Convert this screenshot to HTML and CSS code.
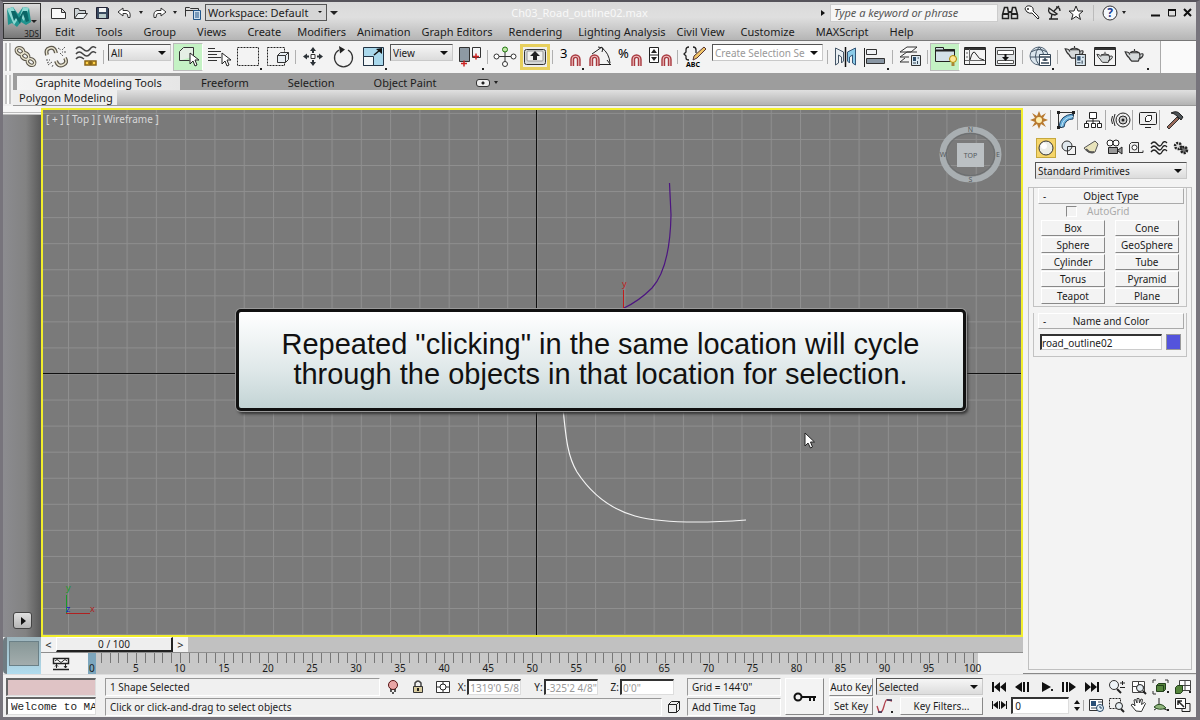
FILE: index.html
```html
<!DOCTYPE html>
<html lang="en">
<head>
    <meta charset="UTF-8">
    <meta name="viewport" content="width=device-width, initial-scale=1.0">
    <title>Ch03_Road_outline02.max</title>
    <link rel="stylesheet" href="styles.css">
</head>
<body>
    <!-- Shapes used by several icons -->
    <svg class="sprites" width="0" height="0" aria-hidden="true">
        <symbol id="magnet" viewBox="0 0 10 12"><path d="M2 11V5a3 3 0 0 1 6 0v6" fill="none" stroke="#a83a40" stroke-width="3.6"/><path d="M2 11V5a3 3 0 0 1 6 0v6" fill="none" stroke="#f0c0c0" stroke-width="1"/></symbol>
        <symbol id="cursor" viewBox="0 0 10 15"><path d="M1 1v11l3-3 2 5 2-1-2-5h4z" fill="#fff" stroke="#222"/></symbol>
        <symbol id="teapot" viewBox="0 0 22 16"><path d="M6 5h10q2 5-1 9H8Q6 12 5 10Q3 9 1 4q4 0 5 3M16 7q5-2 4 1t-5 4M6 5q5-3 10 0M11 3V1" fill="#d5d9da" stroke="#333" stroke-width="1.2"/></symbol>
        <symbol id="panel" viewBox="0 0 10 11"><path d="M.5.5h9v10h-9z" fill="#dceaf3" stroke="#333"/><path d="M2 2h3v4H2z" fill="#2c4c6a"/><path d="M6.500 3H8M2 8h3M6.500 6v3" stroke="#345"/></symbol>
    </svg>

    <div class="window">
        <header class="titlebar">
            <button class="app-button" aria-label="Application menu">
                <svg width="34" height="25" viewBox="0 0 34 25"><path d="M2 4l6-2 5 7 5-7 6 1 2 14-5 3-5-3-4 5-5-4-4 2z" fill="#20938e"/><path d="M2 4l6-2 5 12-4 6zM18 2l6 1-5 13-4-5z" fill="#8ed8d2"/><path d="M6 6l3 10 2-3 4 6 3-10 3 8 3-1-2-10-4 0-4 7-4-7z" fill="#0b6666"/><path d="M26 15h6l-3 3z" fill="#222"/></svg>
                <span>3DS</span>
            </button>
            <div class="title-rows">
                <div class="quickbar">
                    <button class="quick" aria-label="New"><svg width="18" height="14"><path d="M1.500 2.500h10l4 4v6h-14zM11.500 2.500v4h4" fill="#fafafa" stroke="#333"/></svg></button>
                    <button class="quick" aria-label="Open"><svg width="18" height="14"><path d="M2.500 12V2.500h4l1 2h6V7" fill="#ccd3d6" stroke="#333"/><path d="M2.500 12.500L6 7.500h9.500l-4 5z" fill="#eef2f3" stroke="#333"/></svg></button>
                    <button class="quick" aria-label="Save"><svg width="18" height="14"><path d="M2.500 1.500h11l1 1v10h-12z" fill="#3a4a60" stroke="#223"/><path d="M5 2h7v4H5z" fill="#f4f4f4"/><path d="M5 8h7v4H5z" fill="#bcc"/></svg></button>
                    <button class="quick undo" aria-label="Undo"><svg width="18" height="14"><path d="M2 6l5-4v2.500h4q4 1 3 7h-2q0-4-2-4H7V10z" fill="#fff" stroke="#333"/></svg></button>
                    <span class="tiny-arrow"></span>
                    <button class="quick undo" aria-label="Redo"><svg width="18" height="14"><path d="M16 6l-5-4v2.500H7q-4 1-3 7h2q0-4 2-4h3V10z" fill="#fff" stroke="#333"/></svg></button>
                    <span class="tiny-arrow"></span>
                    <button class="quick" aria-label="Project folder"><svg width="18" height="14"><path d="M1.500 10.500v-9h4l1 1h8v3M1.500 4.500h13" fill="none" stroke="#333"/><path d="M9.500 4.500h7v9h-7z" fill="#cfe0ee" stroke="#258"/><path d="M11 7h4M11 9h4M11 11h4" stroke="#258"/></svg></button>
                    <label class="picker workspace"><select aria-label="Workspace"><option>Workspace: Default</option></select></label>
                    <span class="workspace-more"></span>
                    <h1 class="file-name">Ch03_Road_outline02.max</h1>
                    <span class="search-arrow"></span>
                    <input class="search" type="text" aria-label="Search help" placeholder="Type a keyword or phrase">
                    <div class="help-icons">
                        <svg width="18" height="18"><path d="M3.500 3.500h3l1 5v6h-6v-4zM14.500 3.500h-3l-1 5v6h6v-4z" fill="#ddd" stroke="#222" stroke-width="1.500"/><path d="M7 8h4M2 10h5M11 10h5" stroke="#222" stroke-width="2"/></svg>
                        <svg width="18" height="18"><path d="M9 9l6 6 1-1-1-2-5-5q1-4-3-5T2 5l2 3q3 2 5 1z" fill="#fff" stroke="#222"/><circle cx="5" cy="5" r="1" fill="#222"/></svg>
                        <svg width="18" height="18"><path d="M4 4q-2 6 6 7l2-1zM9 7l5-5M4 15h9M6 15l1-5M11 3q4 0 4 4" fill="none" stroke="#222" stroke-width="1.300"/></svg>
                        <svg width="18" height="18"><path d="M9 2l2 5h5l-4 3.500 1.500 5L9 12.500l-4.500 3 1.500-5L2 7h5z" fill="#fff" stroke="#222"/></svg>
                    </div>
                    <button class="help" aria-label="Help"><svg width="16" height="16"><circle cx="8" cy="8" r="7" fill="#f4f8fc" stroke="#333"/><text x="8" y="12" text-anchor="middle">?</text></svg></button>
                    <span class="tiny-arrow"></span>
                    <div class="window-buttons">
                        <button aria-label="Minimize"><svg width="10" height="10"><path d="M0 7.500h9" stroke="#111" stroke-width="2"/></svg></button>
                        <button aria-label="Maximize"><svg width="10" height="10"><path d="M1.500 2h7v6h-7z" fill="none" stroke="#111"/><path d="M1 2h8" stroke="#111" stroke-width="2"/></svg></button>
                        <button aria-label="Close"><svg width="10" height="10"><path d="M1 1l7 7M8 1L1 8" stroke="#111" stroke-width="2"/></svg></button>
                    </div>
                </div>
                <nav class="menu">
                    <a href="#">Edit</a>
                    <a class="far" href="#">Tools</a>
                    <a class="far" href="#">Group</a>
                    <a class="far" href="#">Views</a>
                    <a class="far" href="#">Create</a>
                    <a href="#">Modifiers</a>
                    <a class="near" href="#">Animation</a>
                    <a class="near" href="#">Graph Editors</a>
                    <a href="#">Rendering</a>
                    <a href="#">Lighting Analysis</a>
                    <a class="near" href="#">Civil View</a>
                    <a href="#">Customize</a>
                    <a class="far" href="#">MAXScript</a>
                    <a class="far" href="#">Help</a>
                </nav>
            </div>
        </header>

        <div class="toolbar">
            <span class="grip"></span>
            <div class="tools">
                <button class="tool" aria-label="Link"><svg width="26" height="26"><g fill="none" stroke="#5d584d" stroke-width="3.500"><ellipse cx="7" cy="7" rx="4" ry="3" transform="rotate(35 7 7)"/><ellipse cx="12" cy="12" rx="4" ry="3" transform="rotate(35 12 12)"/><ellipse cx="18" cy="18" rx="4" ry="3" transform="rotate(35 18 18)"/></g><g fill="none" stroke="#e9e4cf" stroke-width="1.500"><ellipse cx="7" cy="7" rx="4" ry="3" transform="rotate(35 7 7)"/><ellipse cx="12" cy="12" rx="4" ry="3" transform="rotate(35 12 12)"/><ellipse cx="18" cy="18" rx="4" ry="3" transform="rotate(35 18 18)"/></g></svg></button>
                <button class="tool" aria-label="Unlink"><svg width="26" height="26"><path d="M4 11Q2 5 7 4t6 5M22 14q3 5-2 7t-7-4" fill="none" stroke="#5d584d" stroke-width="4"/><path d="M4 11Q2 5 7 4t6 5M22 14q3 5-2 7t-7-4" fill="none" stroke="#e9e4cf" stroke-width="1.500"/><path d="M15 4l3 2M22 3l-3 3M23 8h-4M17 9l3 3M3 16h4M9 18l-4 3M10 21l-1 2M4 19l2-1" stroke="#555" stroke-dasharray="2 1"/></svg></button>
                <button class="tool" aria-label="Bind to space warp"><svg width="26" height="26"><path d="M3 5q3-4 7 0t7 0 6-1M3 10q3-4 7 0t7 0 6-1M3 15q3-4 8 0" fill="none" stroke="#444" stroke-width="1.500"/><path d="M12 17h5v4h-5zM18 17h5v4h-5zM15 19h5" fill="#ffd24a" stroke="#8a6415" stroke-width="1.500"/></svg></button>
                <span class="sep"></span>
                <label class="picker filter"><select aria-label="Selection filter"><option>All</option></select></label>
                <button class="tool on" aria-label="Select object"><svg width="26" height="26"><path d="M4.500 16.500v-9l4-4h10v9M4.500 16.500h10" fill="#e5efe5" stroke="#333"/><use href="#cursor" x="14" y="8" width="10" height="15"/></svg></button>
                <button class="tool" aria-label="Select by name"><svg width="26" height="26"><path d="M3 4.500h7M3 7.500h13M3 10.500h9M3 13.500h13M3 16.500h9" stroke="#333"/><use href="#cursor" x="16" y="8" width="10" height="15"/></svg></button>
                <button class="tool fly" aria-label="Rectangular region"><svg width="26" height="26"><path d="M2.500 3.500h21v18h-21z" fill="none" stroke="#222" stroke-dasharray="2 1"/></svg></button>
                <button class="tool" aria-label="Window crossing"><svg width="26" height="26"><path d="M2.500 3.500h17v18h-17z" fill="none" stroke="#222" stroke-dasharray="2 1"/><path d="M12.500 11.500l3-3h8v7l-3 3h-8zM12.500 11.500h8v7M20.500 11.500l3-3" fill="#e7edf2" stroke="#333"/></svg></button>
                <span class="sep"></span>
                <button class="tool" aria-label="Move"><svg width="26" height="26"><path d="M13 3l3 4h-6zM13 22l3-4h-6zM3 12.500l4-3v6zM23 12.500l-4-3v6zM12 7h2v2h-2zM12 16h2v2h-2zM7 11.500h2v2H7zM17 11.500h2v2h-2z" fill="#2c3237"/><path d="M11 10.500h4v4h-4z" fill="#fff" stroke="#333"/></svg></button>
                <button class="tool" aria-label="Rotate"><svg width="26" height="26"><path d="M18 6a9 9 0 1 1-9 0" fill="none" stroke="#333" stroke-width="1.300"/><path d="M9 2l6 3.500-5 4z" fill="#222"/></svg></button>
                <button class="tool fly" aria-label="Scale"><svg width="26" height="26"><path d="M3.500 3.500h20v18h-20z" fill="#a9d8ec" stroke="#234"/><path d="M3.500 12.500h10v9h-10z" fill="#f2f6f8" stroke="#234"/><path d="M14 11l6-5" stroke="#111" stroke-width="1.500"/><path d="M22 4v6l-6-5z" fill="#111"/></svg></button>
                <label class="picker coords"><select aria-label="Reference coordinate system"><option>View</option></select></label>
                <button class="tool fly" aria-label="Pivot center"><svg width="26" height="26"><path d="M2.500 3.500h10v14h-10z" fill="#8e9aa4" stroke="#333"/><path d="M15.500 3.500h8v10h-8z" fill="#f2f4f6" stroke="#333"/><path d="M4 19.500h6M7 16.500v6M16 12.500h6M19 9.500v6" stroke="#c22" stroke-width="1.500"/></svg></button>
                <span class="sep"></span>
                <button class="tool" aria-label="Manipulate"><svg width="26" height="26"><path d="M13 6v14M4 12.500h18" stroke="#333"/><g fill="#fff" stroke="#333"><circle cx="13" cy="20" r="2.500"/><circle cx="4.500" cy="12.500" r="2.500"/><circle cx="21.500" cy="12.500" r="2.500"/><circle cx="13" cy="5.500" r="2.500" fill="#bfe8a5" stroke="#271"/></g></svg></button>
                <button class="tool key-on" aria-label="Keyboard shortcut override"><svg width="24" height="20"><rect x="1.500" y="2.500" width="21" height="15" rx="2" fill="#d5d8d8" stroke="#333"/><rect x="4" y="4" width="16" height="10" rx="1" fill="#f1f1ee" stroke="#999"/><path d="M12 4l5 5h-3v4h-4V9H7z" fill="#222"/></svg></button>
                <span class="sep"></span>
                <button class="tool fly" aria-label="Snaps toggle"><svg width="26" height="28"><text class="icon-text" x="3" y="15">3</text><use href="#magnet" x="13" y="11" width="11" height="13"/></svg></button>
                <button class="tool" aria-label="Angle snap"><svg width="26" height="26"><path d="M5 10L15 3M15 4q7 5 8 15M12 20.500h12M11 3l5 1-1 4M20 16l3 4" fill="none" stroke="#222"/><use href="#magnet" x="2" y="10" width="11" height="13"/></svg></button>
                <button class="tool" aria-label="Percent snap"><svg width="26" height="28"><text class="icon-text" x="1" y="15">%</text><use href="#magnet" x="14" y="11" width="11" height="13"/></svg></button>
                <button class="tool" aria-label="Spinner snap"><svg width="26" height="26"><path d="M2.500 3.500h9v15h-9zM2.500 11h9" fill="#fff" stroke="#222"/><path d="M7 5l3 4H4zM7 17l3-4H4z" fill="#222"/><use href="#magnet" x="14" y="10" width="11" height="13"/></svg></button>
                <span class="sep"></span>
                <button class="tool" aria-label="Edit named selection sets"><svg width="26" height="26"><path d="M7 3q-3 0-3 3v2l-2 2 2 2v2q0 2 3 2M11 3q3 0 3 3v3" fill="none" stroke="#222" stroke-width="1.300"/><path d="M22 3l2 2L15 14l-4 2 1-4z" fill="#f0c468" stroke="#533"/><text class="icon-abc" x="4" y="23">ABC</text></svg></button>
                <label class="picker sets"><select aria-label="Named selection sets"><option>Create Selection Se</option></select></label>
                <span class="sep"></span>
                <button class="tool" aria-label="Mirror"><svg width="26" height="26"><path d="M3.500 4v17l3-2V11l3 2v6l2-2V8z" fill="#e8eef2" stroke="#456"/><path d="M23.500 4v17l-3-2V11l-3 2v6l-2-2V8z" fill="#8ccbe8" stroke="#357"/><path d="M13.500 3v20" stroke="#111" stroke-width="1.500"/></svg></button>
                <button class="tool fly" aria-label="Align"><svg width="26" height="26"><path d="M2.500 4v19" stroke="#222"/><path d="M4.500 5.500h10v5h-10z" fill="#f0f2f4" stroke="#333"/><path d="M4.500 14.500h18v5h-18z" fill="#8996a3" stroke="#333"/></svg></button>
                <span class="sep"></span>
                <button class="tool" aria-label="Layers"><svg width="26" height="26"><path d="M3 8l7-5h10l-6 5zM3 13l7-5h10M3 13h9M3 18l5-4M3 18h9" fill="#fafafa" stroke="#333"/><use href="#panel" x="14" y="11" width="10" height="11"/></svg></button>
                <span class="sep"></span>
                <button class="tool on" aria-label="Graphite tools"><svg width="26" height="26"><path d="M3.500 5.500v-2h8v2h11v12h-19z" fill="#d3e1e8" stroke="#222"/><path d="M3 6.500h20" stroke="#222" stroke-width="2"/><circle cx="21" cy="15" r="3.500" fill="#ffe793" stroke="#a80"/><path d="M19.500 19h3v3h-3z" fill="#a8863a"/></svg></button>
                <button class="tool" aria-label="Curve editor"><svg width="26" height="26"><path d="M2.500 3.500h21v17h-21z" fill="#f4f4f4" stroke="#222"/><path d="M2 5h22" stroke="#333" stroke-width="2"/><path d="M7.500 5v15M3 16.500h20M4 9h2M4 13h2" stroke="#666"/><path d="M8 16q3-12 6-6t8 6" fill="none" stroke="#222"/></svg></button>
                <button class="tool" aria-label="Schematic view"><svg width="26" height="26"><path d="M3.500 3.500h20v18h-20z" fill="#dfe2e4" stroke="#222"/><path d="M5.500 6.500h16v4h-16zM5.500 16.500h16v3h-16z" fill="#fff" stroke="#555"/><path d="M13.500 10v3" stroke="#111" stroke-width="2"/><path d="M10 13h7l-3.500 4z" fill="#111"/></svg></button>
                <span class="sep"></span>
                <button class="tool fly" aria-label="Material editor"><svg width="26" height="26"><circle cx="12" cy="12" r="9" fill="#dae5ed" stroke="#567"/><path d="M4 8q8-5 16 0M3 13h17M12 3q-7 9 0 18M12 3q6 5 4 12" fill="none" stroke="#456"/><path d="M12.500 10.500h11v11h-11z" fill="#fff" stroke="#345"/><path d="M13 13h10M18 14v3M14 19h8M15.500 16h5" stroke="#345" stroke-width="1.500"/></svg></button>
                <span class="sep"></span>
                <button class="tool" aria-label="Render setup"><svg width="26" height="26"><use href="#teapot" x="2" y="1" width="21" height="15"/><use href="#panel" x="13" y="10" width="11" height="12"/></svg></button>
                <button class="tool" aria-label="Rendered frame"><svg width="26" height="26"><path d="M2.500 3.500h21v18h-21z" fill="#f4f4f4" stroke="#222"/><path d="M2 5h22" stroke="#333" stroke-width="2"/><use href="#teapot" x="4" y="7" width="18" height="13"/></svg></button>
                <button class="tool fly" aria-label="Render"><svg width="26" height="26"><use href="#teapot" x="2" y="4" width="21" height="15"/></svg></button>
            </div>
            <div class="toolbar-rest"></div>
        </div>

        <div class="ribbon">
            <span class="grip"></span>
            <div class="ribbon-body">
                <nav class="ribbon-tabs">
                    <a class="tab active" href="#">Graphite Modeling Tools</a>
                    <a class="tab" href="#">Freeform</a>
                    <a class="tab" href="#">Selection</a>
                    <a class="tab" href="#">Object Paint</a>
                    <button class="ribbon-toggle" aria-label="Minimize ribbon"></button>
                    <span class="tiny-arrow"></span>
                </nav>
                <div class="ribbon-panel"><button>Polygon Modeling</button></div>
            </div>
        </div>

        <div class="workspace-area">
            <div class="stage">
                <div class="stage-top">
                    <aside class="dock">
                        <span class="dock-grip"></span>
                        <button aria-label="Expand dock"></button>
                    </aside>
                    <main class="viewport">
                        <!-- Grid and splines, in drawing units -->
                        <svg class="scene" viewBox="43 110 978 525" preserveAspectRatio="xMidYMid slice">
                            <defs>
                                <pattern id="grid" x="536.500" y="373.500" width="29.280" height="26.060" patternUnits="userSpaceOnUse"><path d="M0 0V26.060M0 0H29.280" stroke="#8f8f8f" stroke-width="2"/></pattern>
                            </defs>
                            <rect x="43" y="110" width="978" height="525" fill="#7a7a7a"/>
                            <rect x="43" y="110" width="978" height="525" fill="url(#grid)"/>
                            <path d="M536.500 110v525M43 373.500h978" stroke="#101010"/>
                            <path d="M669.500 183L671 215Q670 268 652 288Q639 301 624 308" fill="none" stroke="#4c1580" stroke-width="1.200"/>
                            <path d="M563 408C566 440 568 457 577 472C590 492 607 508 635 516C665 524 705 523 746 520" fill="none" stroke="#f4f4f4" stroke-width="1.200"/>
                            <path d="M623.500 290v20" stroke="#c01c1c"/>
                            <text class="axis" x="622" y="287" fill="#c01c1c">y</text>
                            <path d="M66.500 613.500V595" stroke="#189a28"/>
                            <path d="M66 613.500h24" stroke="#b02020"/>
                            <text class="axis" x="66" y="591" fill="#189a28">y</text>
                            <text class="axis" x="90" y="612" fill="#b02020">x</text>
                            <text class="axis" x="66" y="612" fill="#1515c0">z</text>
                            <!-- View cube -->
                            <ellipse cx="970.500" cy="154.500" rx="28" ry="25" fill="none" stroke="#a9afb2" stroke-width="6"/>
                            <ellipse cx="970.500" cy="154.500" rx="24" ry="21" fill="none" stroke="#6a6e70"/>
                            <path d="M957 143h27v24h-27z" fill="#bbc0c3"/>
                            <g class="cube" text-anchor="middle"><text x="970.500" y="158">TOP</text><text x="970.500" y="132">N</text><text x="970.500" y="182">S</text><text x="943" y="157">W</text><text x="998" y="157">E</text></g>
                        </svg>
                        <div class="view-label">[ + ] [ Top ] [ Wireframe ]</div>
                    </main>
                </div>
                <div class="timeline">
                    <div class="dock-corner"><span></span></div>
                    <div class="time-rows">
                        <div class="slider-row">
                            <button class="step">&lt;</button><button class="frame-slider">0 / 100</button><button class="step">&gt;</button>
                        </div>
                        <div class="track">
                            <button class="mini-curve" aria-label="Mini curve editor"><svg width="18" height="16"><path d="M1.500 2.500h15v5h-15zM1 13.500h16" fill="#fff" stroke="#222" stroke-width="1.500"/><path d="M3 5q2-3 4 0t4 0 4 0M4.500 8v4M13.500 8v4M3 10.500L4.500 9 6 10.500M12 10l1.500 2L15 10" fill="none" stroke="#222"/></svg></button>
                            <div class="ruler">
                                <span class="now">0</span><span class="digit">5</span><span>10</span><span>15</span><span>20</span><span>25</span><span>30</span><span>35</span><span>40</span><span>45</span><span>50</span><span>55</span><span>60</span><span>65</span><span>70</span><span>75</span><span>80</span><span>85</span><span>90</span><span>95</span><span class="last">100</span>
                            </div>
                        </div>
                    </div>
                </div>
            </div>

            <aside class="command">
                <div class="command-tabs">
                    <button aria-label="Create"><svg width="20" height="20"><path d="M10 1l2 5 5-3-3 5 5 2-5 2 3 5-5-3-2 5-2-5-5 3 3-5-5-2 5-2-3-5 5 3z" fill="#b87a30"/><circle cx="10" cy="10" r="3" fill="#fff0b0"/></svg></button>
                    <button aria-label="Modify"><svg width="20" height="20"><path d="M2.500 17.500v-15h15v4M2.500 17.500h4" fill="none" stroke="#333"/><path d="M3 17Q4 5 17 4v5Q9 9 8 17z" fill="#68b0dc" stroke="#246"/><path d="M5.500 17Q7 7 17 6.500" fill="none" stroke="#c5e5f5"/><path d="M1 1h3v3H1zM16 1h3v3h-3zM1 16h3v3H1z" fill="#222"/></svg></button>
                    <button aria-label="Hierarchy"><svg width="20" height="20"><path d="M6.500 2.500h7v6h-7zM1.500 13.500h4v4h-4zM8.500 13.500h4v4h-4zM14.500 13.500h4v4h-4zM10 9v4M3.500 13v-2h13v2" fill="#fff" stroke="#222"/></svg></button>
                    <button aria-label="Motion"><svg width="20" height="20"><circle cx="12" cy="10" r="7" fill="#eee" stroke="#222"/><circle cx="12" cy="10" r="4" fill="#ccc" stroke="#222"/><circle cx="12" cy="10" r="1.500" fill="#222"/><path d="M4 4q-3 6 0 12M1.500 6q-2 4 0 8" fill="none" stroke="#222"/></svg></button>
                    <button aria-label="Display"><svg width="20" height="20"><rect x="1.500" y="2.500" width="17" height="12" rx="1" fill="#eee" stroke="#222"/><path d="M7.500 7.500l2-2h4v4l-2 2h-4zM7 17.500h6" fill="#fff" stroke="#222"/></svg></button>
                    <button aria-label="Utilities"><svg width="20" height="20"><path d="M2 17L12 7l2 2L4 19z" fill="#98695a" stroke="#333"/><path d="M6 3q6-3 9 1l3 3-2 3-4-4q-3-3-6-3z" fill="#4c5256" stroke="#222"/></svg></button>
                </div>
                <div class="create-kinds">
                    <button class="picked" aria-label="Geometry"><svg width="18" height="18"><circle cx="9" cy="9" r="7" fill="#eceee8" stroke="#333"/><circle cx="7" cy="7" r="3" fill="#fff"/></svg></button>
                    <button aria-label="Shapes"><svg width="18" height="18"><circle cx="7" cy="7" r="5" fill="#dfe8ee" stroke="#333"/><path d="M7.500 7.500h8v8h-8z" fill="none" stroke="#333"/></svg></button>
                    <button aria-label="Lights"><svg width="18" height="18"><path d="M13 2l3 3-3 8q-6 3-11-4z" fill="#e8e3bb" stroke="#555"/><path d="M4 10q3 4 8 3" fill="none" stroke="#555" stroke-width="2"/></svg></button>
                    <button aria-label="Cameras"><svg width="18" height="18"><circle cx="5" cy="4" r="3" fill="#fff" stroke="#222"/><circle cx="11" cy="4" r="3" fill="#fff" stroke="#222"/><path d="M3.500 8.500h9v6h-9zM13 11l4-3v7l-4-3" fill="#999" stroke="#222"/></svg></button>
                    <button aria-label="Helpers"><svg width="18" height="18"><path d="M2.500 13.500v-8l2-2h7v10M2 13.500h14v-2" fill="#eee" stroke="#333"/><circle cx="7.500" cy="8.500" r="2.500" fill="#fff" stroke="#333"/></svg></button>
                    <button aria-label="Space warps"><svg width="18" height="18"><path d="M1 5q3-4 6 0t5 0 5-1M1 9q3-4 6 0t5 0 5-1M1 13q3-4 6 0t5 0 5-1" fill="none" stroke="#222" stroke-width="1.300"/></svg></button>
                    <button aria-label="Systems"><svg width="18" height="18"><circle cx="6" cy="7" r="3" fill="#ddd" stroke="#222" stroke-width="2.500" stroke-dasharray="2 1"/><circle cx="12" cy="11" r="3" fill="#777" stroke="#222" stroke-width="2.500" stroke-dasharray="2 1"/></svg></button>
                </div>
                <label class="picker category"><select aria-label="Category"><option>Standard Primitives</option></select></label>

                <div class="rollouts">
                    <section class="rollout">
                        <h2><span>-</span>Object Type</h2>
                        <label class="autogrid"><input type="checkbox" disabled>AutoGrid</label>
                        <div class="type-grid">
                            <button>Box</button><button>Cone</button>
                            <button>Sphere</button><button>GeoSphere</button>
                            <button>Cylinder</button><button>Tube</button>
                            <button>Torus</button><button>Pyramid</button>
                            <button>Teapot</button><button>Plane</button>
                        </div>
                    </section>
                    <section class="rollout">
                        <h2><span>-</span>Name and Color</h2>
                        <div class="name-row">
                            <input type="text" aria-label="Object name" value="road_outline02">
                            <button class="swatch" aria-label="Object color"></button>
                        </div>
                    </section>
                </div>
            </aside>
        </div>

        <footer class="status">
            <div class="listener">
                <div class="macro"></div>
                <input type="text" aria-label="Listener" value="Welcome to MAXScript.">
            </div>
            <div class="messages">
                <div class="status-line">
                    <div class="sunken grow">1 Shape Selected</div>
                    <div class="lock-icons">
                        <svg width="14" height="16"><circle cx="7" cy="6" r="4.500" fill="#e8a5a5" stroke="#511"/><path d="M5 10v3M9 10v3M6 14h2" stroke="#222" stroke-width="1.500"/></svg>
                        <svg width="14" height="16"><path d="M4 7V4q3-4 6 0v3" fill="none" stroke="#444" stroke-width="1.500"/><path d="M2.500 7.500h9v6h-9z" fill="#d9cc9e" stroke="#333"/><path d="M7 9v3" stroke="#222" stroke-width="2"/></svg>
                        <svg width="14" height="16"><path d="M.5 2.500h13v11H.5zM7 2v12M0 8h14" fill="#fff" stroke="#333"/><circle cx="7" cy="8" r="3" fill="#fff" stroke="#222"/></svg>
                    </div>
                    <label class="coord">X:<input type="text" value="1319'0 5/8"></label>
                    <label class="coord">Y:<input type="text" value="-325'2 4/8&quot;"></label>
                    <label class="coord">Z:<input type="text" value="0'0&quot;"></label>
                </div>
                <div class="status-line">
                    <div class="sunken grow">Click or click-and-drag to select objects</div>
                    <button class="iso" aria-label="Adaptive degradation"><svg width="14" height="14"><path d="M1.500 4.500l3-3h8v8l-3 3h-8zM1.500 4.500h8v8M9.500 4.500l3-3" fill="none" stroke="#222"/></svg></button>
                </div>
            </div>
            <div class="grid-info">
                <div class="sunken">Grid = 144'0"</div>
                <div class="sunken">Add Time Tag</div>
            </div>
            <button class="raised set-keys" aria-label="Set keys"><svg width="24" height="12"><circle cx="5" cy="6" r="3.500" fill="none" stroke="#111" stroke-width="2"/><path d="M8 6h15M17 6v4M21 6v4" stroke="#111" stroke-width="2"/></svg></button>
            <div class="key-modes">
                <button class="raised">Auto Key</button>
                <button class="raised">Set Key</button>
            </div>
            <div class="key-filter">
                <label class="picker"><select aria-label="Key target"><option>Selected</option></select></label>
                <div class="filter-line">
                    <button class="tangent fly" aria-label="Default tangents"><svg width="18" height="16"><path d="M1 8l2 6Q6 16 8 8t4-6l4 1" fill="none" stroke="#b0404c" stroke-width="1.300"/><path d="M2 14h4M11 2h5" stroke="#335" stroke-width="1.500"/></svg></button>
                    <button class="raised grow">Key Filters...</button>
                </div>
            </div>
            <div class="playback">
                <div class="play-row">
                    <button aria-label="Go to start"><svg width="16" height="12"><path d="M1 1h2v10H1zM9 1v10L3 6zM15 1v10L9 6z" fill="#111"/></svg></button>
                    <button aria-label="Previous frame"><svg width="16" height="12"><path d="M8 1v10L1 6zM9 1h2v10H9zM13 1h2v10h-2z" fill="#111"/></svg></button>
                    <button class="fly" aria-label="Play"><svg width="16" height="12"><path d="M4 1v10l9-5z" fill="#111"/></svg></button>
                    <button aria-label="Next frame"><svg width="16" height="12"><path d="M8 1v10l7-5zM1 1h2v10H1zM5 1h2v10H5z" fill="#111"/></svg></button>
                    <button aria-label="Go to end"><svg width="16" height="12"><path d="M1 1v10l6-5zM7 1v10l6-5zM13 1h2v10h-2z" fill="#111"/></svg></button>
                </div>
                <div class="play-row">
                    <button aria-label="Key mode"><svg width="16" height="12"><path d="M1 2h1v8H1zM7 2v8L2 6zM8 2h1v8H8zM10 2v8l5-4zM15 2h1v8h-1z" fill="#111"/></svg></button>
                    <input type="text" aria-label="Current frame" value="0">
                    <span class="spinner"></span>
                    <button aria-label="Time configuration"><svg width="16" height="16"><path d="M1.500 2.500h13v11h-13z" fill="#fff" stroke="#333"/><path d="M3 4h5v5H3z" fill="#295078"/><path d="M10 5h4M3 11h6" stroke="#345"/><circle cx="12" cy="11" r="3.500" fill="#e7f2f8" stroke="#246"/><path d="M12 9v2h2" fill="none" stroke="#246"/></svg></button>
                </div>
            </div>
            <div class="nav-tools">
                <button aria-label="Zoom"><svg width="18" height="16"><circle cx="6" cy="6" r="4.500" fill="#eef4f8" stroke="#333"/><path d="M9 10l4 4" stroke="#222" stroke-width="2"/><path d="M12 4h5M14.500 2v4M12 8.500h5" stroke="#222"/></svg></button>
                <button aria-label="Zoom all"><svg width="18" height="16"><path d="M2.500 2.500h12v11h-12zM8.500 2v11M2 7.500h12" fill="#fff" stroke="#444"/><circle cx="10" cy="9" r="3.500" fill="#e5edf2" stroke="#222"/><path d="M13 12l3 3" stroke="#222" stroke-width="2"/></svg></button>
                <button class="fly" aria-label="Zoom extents"><svg width="18" height="16"><path d="M1 4V1h3M13 1h3v3M1 12v3h3" fill="none" stroke="#333"/><path d="M4.500 6.500l2-2h7v6l-2 2h-7zM4.500 6.500h7v6" fill="#55853c" stroke="#23401c"/></svg></button>
                <button class="fly" aria-label="Zoom extents all"><svg width="18" height="16"><path d="M5.500 1.500h11v10h-11zM11 1v10M5 6.500h11" fill="#fff" stroke="#444"/><path d="M1.500 8.500l2-2h5v6l-2 2h-5z" fill="#55853c" stroke="#23401c"/></svg></button>
                <button aria-label="Region zoom"><svg width="18" height="16"><path d="M1.500 1.500h11v10h-11z" fill="none" stroke="#222" stroke-dasharray="2 1"/><circle cx="11" cy="9" r="3.500" fill="#e5edf2" stroke="#222"/><path d="M13 12l3 3" stroke="#222" stroke-width="2"/></svg></button>
                <button aria-label="Pan"><svg width="18" height="16"><path d="M6 14L1 8l2-1 2 2-1-6 1.500-.5L7 6V1.500h2L9.500 6l1.500-4 1.500.5-1 5 3-2 1 1-4 8z" fill="#fff" stroke="#333"/></svg></button>
                <button class="fly" aria-label="Orbit"><svg width="18" height="16"><path d="M7 1v9l8 3M7 10l-5 3" fill="none" stroke="#222"/><path d="M2 10q6-6 12 1-7 3-12-1z" fill="#8fb47c" stroke="#264a20"/></svg></button>
                <button aria-label="Maximize viewport"><svg width="18" height="16"><path d="M1.500 1.500h10v10h-10z" fill="#fff" stroke="#222"/><path d="M4 4l6 6M4 8V4h4" fill="none" stroke="#222" stroke-width="1.500"/><path d="M12 6.500h4v8H8v-3" fill="none" stroke="#222"/></svg></button>
            </div>
        </footer>

        <div class="caption">Repeated "clicking" in the same location will cycle<br>through the objects in that location for selection.</div>
        <svg class="pointer" width="12" height="18"><path d="M1 1v13l3-3 2.500 5 2-1-2-5h4z" fill="#fff" stroke="#222"/></svg>
    </div>
</body>
</html>
```
FILE: styles.css
```css
* {
    box-sizing: border-box;
}

body {
    margin: 0;
    font-family: "Noto Sans", sans-serif;
    font-size: 11px;
    line-height: 14px;
    color: #1c1c1c;
    background: #f0f0f0;
}

a {
    color: inherit;
    text-decoration: none;
}

button, input, select {
    font: inherit;
    color: inherit;
    margin: 0;
    padding: 0;
    border: none;
    border-radius: 0;
    background: none;
}

h1, h2 {
    margin: 0;
    font-size: inherit;
    font-weight: normal;
}

svg {
    display: block;
}

.sprites {
    position: absolute;
}

.window {
    position: relative;
    display: flex;
    flex-direction: column;
    height: 100vh;
    min-height: 600px;
    overflow: hidden;
    border: 3px solid #77747c;
    border-top: 2px solid #55535a;
    border-right: 4px solid #77747c;
    background: #f1f1f1;
}

.grow {
    flex: 1;
}

/* Title bar and menu */
.titlebar {
    display: flex;
    height: 39px;
    border-bottom: 1px solid #777;
    background: linear-gradient(#d9d9d9, #dfdfdf 40%, #b5b5b5);
}

.app-button {
    width: 38px;
    height: 36px;
    margin-top: 1px;
    padding: 1px;
    border: 1px solid #333;
    background: linear-gradient(#dcdcdc, #777);
    text-align: right;
}

.app-button span {
    display: block;
    font-size: 8px;
    line-height: 8px;
}

.title-rows {
    flex: 1;
}

.quickbar {
    display: flex;
    align-items: center;
    height: 21px;
    padding-left: 8px;
}

.quick {
    width: 22px;
    padding-left: 1px;
}

.quick.undo {
    width: 20px;
}

.tiny-arrow {
    width: 4px;
    margin: 0 6px 0 4px;
    border: 2px solid transparent;
    border-top: 3px solid #222;
    border-bottom: 0;
}

.picker {
    position: relative;
    display: block;
    height: 17px;
    border: 1px solid #c9c9c9;
    border-top-color: #555;
    border-left-color: #555;
    background: linear-gradient(#f6f6f6, #dcdcdc);
}

.picker::after {
    content: "";
    position: absolute;
    right: 4px;
    top: 6px;
    border: 4px solid transparent;
    border-top-color: #111;
    border-bottom: 0;
}

.picker select {
    display: block;
    width: 100%;
    height: 15px;
    padding-left: 2px;
    font-size: 10px;
    line-height: 14px;
    appearance: none;
}

.workspace {
    width: 122px;
    border-color: #555;
    background: #d6d6d6;
}

.workspace select {
    font-size: 11px;
}

.workspace::after {
    border-width: 2px;
    border-bottom: 0;
}

.workspace-more {
    width: 8px;
    margin-left: 3px;
    border: 4px solid transparent;
    border-top-color: #222;
    border-bottom: 0;
}

.file-name {
    flex: 1;
    padding-left: 120px;
    text-align: center;
    color: #f8f8f8;
}

.search-arrow {
    margin: 0 5px 0 120px;
    border: 3px solid transparent;
    border-left: 4px solid #111;
    border-right: 0;
}

.search {
    width: 168px;
    height: 18px;
    padding-left: 3px;
    border: 1px solid #ccc;
    background: #f6f6f6;
    font-style: italic;
}

.search::placeholder {
    color: #555;
}

.help-icons {
    display: flex;
    gap: 4px;
    margin: 0 8px 0 3px;
}

.help {
    padding-left: 8px;
    border-left: 1px solid #bbb;
}

.help text {
    font: bold 12px "Noto Sans", sans-serif;
    fill: #1c3f94;
}

.window-buttons {
    display: flex;
    gap: 6px;
    margin: 0 3px 0 19px;
}

.menu {
    display: flex;
    padding-left: 14px;
    line-height: 17px;
}

.menu a + a {
    margin-left: 16px;
}

.menu a.far {
    margin-left: 21px;
}

.menu a.near {
    margin-left: 11px;
}

/* Main toolbar */
.toolbar {
    display: flex;
    height: 32px;
    background: #f3f3f3;
}

.grip {
    width: 6px;
    margin: 2px 0 2px 2px;
    border: solid #c4c4c4;
    border-width: 0 2px;
    background: #fff;
}

.tools {
    display: flex;
    flex: none;
}

.tool {
    display: flex;
    justify-content: center;
    align-items: center;
    width: 30px;
    height: 31px;
}

.tool.on {
    height: 28px;
    margin-top: 2px;
    border: 1px solid #bbb;
    border-right-color: #fff;
    background: #c4f2c4;
}

.tool.key-on {
    height: 26px;
    margin-top: 3px;
    border: 3px solid #e7cf5c;
    background: #eee;
}

.fly {
    position: relative;
}

.fly::after {
    content: "";
    position: absolute;
    right: 1px;
    bottom: 2px;
    width: 2px;
    height: 2px;
    background: #222;
}

.icon-text {
    font-size: 13px;
}

.icon-abc {
    font-size: 7px;
    font-weight: bold;
}

.sep {
    width: 1px;
    height: 14px;
    margin: 9px 2px;
    background: #b0b0b0;
}

.tools .picker {
    margin: 3px 2px;
}

.filter, .coords {
    width: 63px;
}

.sets {
    width: 111px;
    background: #fff;
    color: #999;
}

.toolbar-rest {
    flex: 1;
    margin-left: 10px;
    border-left: 1px solid #aaa;
    background: #fafafa;
}

/* Ribbon */
.ribbon {
    display: flex;
    height: 33px;
    background: #f0f0f0;
}

.ribbon-body {
    flex: 1;
    margin-left: 2px;
}

.ribbon-tabs {
    display: flex;
    align-items: center;
    height: 17px;
    padding: 2px 0 0 4px;
    background: #9d9d9d;
}

.tab {
    margin-right: 39px;
    line-height: 13px;
}

.tab.active {
    width: 163px;
    margin-right: 21px;
    background: linear-gradient(90deg, #f4f4f4, #e6e6e6);
    line-height: 14px;
    text-align: center;
}

.ribbon-toggle {
    width: 14px;
    height: 8px;
    border: 1px solid #333;
    border-radius: 3px;
    background: radial-gradient(circle, #222 1px, #eee 2px);
}

.ribbon-panel {
    height: 16px;
    border-bottom: 1px solid #999;
    background: linear-gradient(#e0e0e0, #b2b2b2);
}

.ribbon-panel button {
    display: block;
    height: 15px;
    padding: 0 4px 0 6px;
    line-height: 14px;
    background: #eee;
}

/* Viewport, timeline and docks */
.workspace-area {
    display: flex;
    flex: 1;
    min-height: 0;
}

.stage {
    display: flex;
    flex: 1;
    flex-direction: column;
    min-width: 0;
}

.stage-top {
    display: flex;
    flex: 1;
    min-height: 0;
}

.dock {
    display: flex;
    flex-direction: column;
    justify-content: space-between;
    align-items: center;
    width: 38px;
    padding-bottom: 8px;
    background: linear-gradient(90deg, #8c8c90, #828282 60%, #5a5a5a);
}

.dock-grip {
    align-self: stretch;
    height: 9px;
    border-bottom: 3px double #bbb;
    background: #f6f6f6;
}

.dock button {
    width: 19px;
    height: 17px;
    border: 1px solid #444;
    border-radius: 3px;
    background: linear-gradient(#e0e0e0, #b5b5b5);
}

.dock button::before {
    content: "";
    display: block;
    width: 5px;
    margin-left: 7px;
    border: 4px solid transparent;
    border-left: 5px solid #111;
    border-right: 0;
}

.viewport {
    position: relative;
    flex: 1;
    min-width: 0;
    margin-top: 2px;
    border: 2px solid #f2ee2c;
}

.scene {
    width: 100%;
    height: 100%;
}

.axis {
    font-size: 9px;
}

.cube {
    font-size: 7px;
    fill: #55595c;
}

.view-label {
    position: absolute;
    left: 3px;
    top: 2px;
    font-size: 10px;
    color: #d8d8d8;
}

.timeline {
    display: flex;
    height: 37px;
}

.dock-corner {
    width: 38px;
    padding: 4px 2px 8px 2px;
    border-left: 4px solid #6f7c82;
    border-radius: 4px 0 0 4px;
    background: linear-gradient(#9db4bc, #b0dcee);
}

.dock-corner span {
    display: block;
    height: 100%;
    border: 1px solid #6a8087;
    background: linear-gradient(#889898, #a3adad);
}

.time-rows {
    flex: 1;
    background: #f2f2f2;
}

.slider-row {
    display: flex;
    height: 16px;
    border-bottom: 1px solid #8e8e8e;
    background: #c1c1c1;
}

.step {
    width: 15px;
    background: #f2f2f2;
    line-height: 14px;
}

.frame-slider {
    width: 117px;
    height: 15px;
    border: 1px solid #fff;
    border-right: 2px solid #222;
    border-bottom: 2px solid #222;
    background: #eee;
    font-size: 10px;
    line-height: 12px;
}

.track {
    display: flex;
    height: 21px;
}

.mini-curve {
    width: 51px;
    padding-left: 11px;
}

.ruler {
    display: flex;
    flex: 1;
    margin-right: 45px;
    margin-left: -4px;
    padding: 0 4px;
    background: #c8c8c8;
}

/* Five frames per cell, the label centred on the first tick */
.ruler span {
    flex: 1;
    min-width: 0;
    padding-top: 9px;
    background: repeating-linear-gradient(90deg, #777 0 1px, transparent 1px 20%) top / 100% 10px no-repeat;
    font-size: 10px;
    line-height: 12px;
    text-indent: -6px;
    white-space: nowrap;
}

.ruler .digit {
    text-indent: -3px;
}

.ruler .now {
    text-indent: -3px;
    box-shadow: inset 4px 0 0 #7da6bd, -4px 0 0 #7da6bd;
}

.ruler .last {
    flex: 0 0 1px;
    text-indent: -9px;
}

/* Command panel */
.command {
    display: flex;
    flex-direction: column;
    flex: none;
    width: 173px;
    padding: 4px 4px 3px 5px;
    border-bottom: 1px solid #888;
    background: #f3f3f3;
}

.command-tabs, .create-kinds {
    display: flex;
    justify-content: space-between;
}

.command-tabs {
    padding: 0 7px 0 1px;
}

.command-tabs button + button {
    padding-left: 5px;
    border-left: 1px solid #aaa;
}

.create-kinds {
    padding: 9px 2px 1px 9px;
}

.create-kinds .picked {
    outline: 1px solid #c5a83e;
    background: #f6d56a;
}

.category {
    margin: 4px 5px 8px 7px;
}

.rollouts {
    flex: 1;
    padding: 0 4px;
    border: 1px solid #c0c0c0;
}

.rollout {
    margin-top: 7px;
    padding: 0 1px;
    border: 1px solid #c2c2c2;
    border-top: 0;
    font-size: 10px;
}

.rollout + .rollout {
    margin-top: 13px;
}

.rollout h2 {
    display: flex;
    justify-content: center;
    position: relative;
    margin: -7px 1px 0 3px;
    border: 1px solid #fff;
    border-right-color: #aaa;
    border-bottom-color: #aaa;
    line-height: 14px;
}

.rollout h2 span {
    position: absolute;
    left: 4px;
}

.autogrid {
    display: flex;
    align-items: center;
    gap: 10px;
    padding-left: 31px;
    color: #aaa;
    line-height: 14px;
}

.autogrid input {
    appearance: none;
    width: 11px;
    height: 11px;
    border: 1px solid #fff;
    border-top-color: #888;
    border-left-color: #888;
}

.type-grid {
    display: grid;
    grid-template-columns: 1fr 1fr;
    gap: 1px 10px;
    padding: 2px 6px 2px 6px;
}

.type-grid button, .raised {
    height: 16px;
    border: 1px solid #fff;
    border-right-color: #888;
    border-bottom-color: #888;
    background: #f3f3f3;
    line-height: 14px;
}

.name-row {
    display: flex;
    gap: 4px;
    padding: 5px 4px 6px 5px;
}

.name-row input {
    flex: 1;
    min-width: 0;
    height: 16px;
    border: 1px solid #ccc;
    border-top: 2px solid #333;
    border-left: 2px solid #333;
    background: #fff;
}

.swatch {
    width: 15px;
    height: 16px;
    border: 1px solid #999;
    background: #5454dc;
}

/* Status bar */
.status {
    display: flex;
    height: 43px;
    padding: 3px 4px 2px 3px;
    border-top: 1px solid #ddd;
    font-size: 10px;
    background: #f0f0f0;
}

.listener {
    width: 90px;
    margin-right: 9px;
}

.macro, .listener input {
    display: block;
    width: 100%;
    height: 18px;
    border: 1px solid #ddd;
    border-top: 2px solid #666;
    border-left: 2px solid #666;
    background: #dfc3c5;
}

.listener input {
    margin-top: 1px;
    padding-left: 3px;
    background: #fff;
    font: 11px "Liberation Mono", monospace;
}

.messages {
    flex: 1;
    min-width: 0;
}

.status-line {
    display: flex;
    align-items: center;
    height: 18px;
    margin-bottom: 2px;
}

.sunken {
    height: 18px;
    padding-left: 4px;
    border: 1px solid #fff;
    border-top-color: #999;
    border-left-color: #999;
    line-height: 17px;
    white-space: nowrap;
}

.lock-icons {
    display: flex;
    gap: 11px;
    margin: 0 8px 0 6px;
}

.coord {
    display: flex;
    align-items: center;
    margin-right: 13px;
}

.coord input {
    width: 54px;
    height: 16px;
    margin-left: 1px;
    padding-left: 1px;
    border: 1px solid #ddd;
    border-top: 2px solid #333;
    border-left: 2px solid #333;
    background: #fff;
    color: #999;
}

.iso {
    margin: 0 6px 0 5px;
}

.grid-info {
    display: flex;
    flex-direction: column;
    gap: 2px;
    width: 94px;
    margin-right: 4px;
}

.set-keys {
    display: flex;
    justify-content: center;
    align-items: center;
    width: 39px;
    height: 37px;
    margin-right: 5px;
}

.key-modes {
    display: flex;
    flex-direction: column;
    gap: 1px;
    width: 44px;
    margin-right: 3px;
}

.key-modes .raised {
    height: 18px;
}

.key-filter {
    width: 107px;
    margin-right: 8px;
}

.filter-line {
    display: flex;
    gap: 6px;
    margin-top: 2px;
}

.filter-line .raised {
    height: 18px;
}

.playback {
    width: 113px;
    margin-right: 4px;
}

.play-row {
    display: flex;
    align-items: center;
    justify-content: space-between;
    height: 18px;
}

.play-row:first-child {
    padding-right: 4px;
}

.play-row input {
    width: 58px;
    height: 17px;
    padding-left: 2px;
    border: 1px solid #ddd;
    border-top: 2px solid #333;
    border-left: 2px solid #333;
    background: #fff;
}

.spinner {
    display: flex;
    flex-direction: column;
    gap: 3px;
    padding-right: 3px;
    border-right: 1px solid #aaa;
}

.spinner::before, .spinner::after {
    content: "";
    border: 3px solid transparent;
    border-bottom: 4px solid #111;
    border-top: 0;
}

.spinner::after {
    border-top: 4px solid #111;
    border-bottom: 0;
}

.nav-tools {
    display: grid;
    grid-template-columns: repeat(4, 18px);
    grid-template-rows: 18px 18px;
    align-items: center;
    gap: 0 4px;
}

/* Caption and pointer lie over the whole window */
.caption {
    position: absolute;
    top: 307px;
    left: 50%;
    width: 730px;
    margin-left: -364px;
    padding: 17px 0 19px;
    border: 3px solid #111;
    border-radius: 5px;
    background: linear-gradient(#fff, #dfe8e9 60%, #c3d4d5);
    box-shadow: 0 0 0 1px #999, 2px 3px 3px #333;
    font-family: "Liberation Sans", Arial, sans-serif;
    font-size: 29px;
    line-height: 30px;
    text-align: center;
    color: #111;
}

.pointer {
    position: absolute;
    left: 801px;
    top: 430px;
}
```
